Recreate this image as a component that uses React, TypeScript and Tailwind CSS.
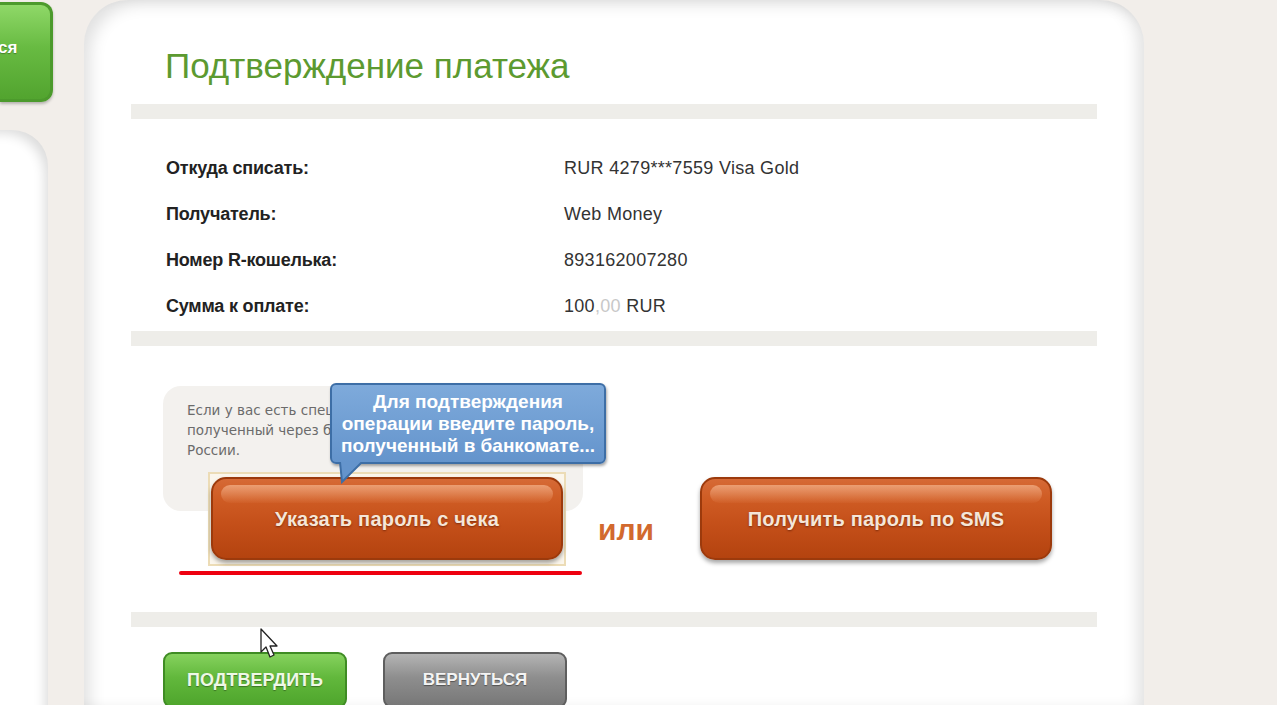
const rows = [
  { label: "Откуда списать:", value: <>RUR 4279***7559 Visa Gold</> },
  { label: "Получатель:", value: <>Web Money</> },
  { label: "Номер R-кошелька:", value: <>893162007280</> },
  {
    label: "Сумма к оплате:",
    value: (
      <>
        100<span className="text-[#c8c8c8]">,00</span> RUR
      </>
    ),
  },
];

const OrangeButton = ({ label }: { label: string }) => (
  <div className="relative flex h-[83px] w-[352px] items-center justify-center overflow-hidden rounded-[15px] border-2 border-[#9c3a0c] bg-[linear-gradient(to_bottom,#d66a36_0%,#cf5c24_25%,#c5501a_55%,#b4430f_100%)] shadow-[0_3px_4px_rgba(0,0,0,0.35)]">
    <div className="absolute left-[8px] right-[8px] top-[6px] h-[18px] rounded-[10px] bg-[linear-gradient(to_bottom,rgba(255,205,170,0.55),rgba(255,170,120,0.05))]" />
    <span className="relative text-[20px] font-bold tracking-[0.2px] text-[#f5e6d8] [text-shadow:0_1px_2px_rgba(80,20,0,0.6)]">
      {label}
    </span>
  </div>
);

const Cursor = () => (
  <svg width="22" height="32" viewBox="0 0 22 32" className="absolute left-[176px] top-[628px]">
    <path d="M1 1 L1 24 L6 19 L10 29 L14 27 L10 18 L17 18 Z" fill="#fff" stroke="#222" strokeWidth="1.3" strokeLinejoin="round" />
  </svg>
);

export default function App() {
  return (
    <div className="flex h-[705px] w-[1277px] overflow-hidden bg-[#f2eeea] font-['Liberation_Sans',Arial,sans-serif]">
      {/* left column */}
      <div className="flex w-[53px] shrink-0 flex-col gap-[28px] pt-[2px]">
        <div className="relative flex h-[100px] w-[53px] items-center overflow-hidden rounded-r-[12px] border-[3px] border-l-0 border-[#4c9a2c] bg-[linear-gradient(to_bottom,#8fd868_0%,#68bb42_45%,#52a42f_100%)] pb-[8px] shadow-[0_2px_3px_rgba(0,0,0,0.25)]">
          <span className="-ml-[2px] text-[17px] font-bold text-white [text-shadow:0_1px_1px_rgba(0,0,0,0.3)]">ся</span>
        </div>
        <div className="w-[48px] flex-1 rounded-tr-[36px] bg-white shadow-[inset_-9px_9px_12px_-6px_rgba(0,0,0,0.14)]" />
      </div>

      {/* main panel */}
      <div className="relative ml-[31px] w-[1060px] shrink-0 rounded-t-[44px] bg-white px-[47px] shadow-[inset_12px_10px_16px_-6px_rgba(0,0,0,0.12),inset_-12px_0_16px_-6px_rgba(0,0,0,0.12)]">
        <div className="h-[104px] pl-[34px] pt-[44px]">
          <h1 className="text-[35px] leading-[44px] text-[#5c9a30]">Подтверждение платежа</h1>
        </div>
        <div className="h-[15px] bg-[#eeede9]" />

        <div className="mb-[2px] mt-[26px]">
          {rows.map((row) => (
            <div key={row.label} className="flex h-[46px] items-center">
              <div className="w-[433px] pl-[35px] text-[18px] font-bold tracking-[-0.2px] text-[#222]">{row.label}</div>
              <div className="text-[18px] tracking-[0.3px] text-[#333]">{row.value}</div>
            </div>
          ))}
        </div>
        <div className="h-[15px] bg-[#eeede9]" />

        <div className="ml-[32px] mt-[40px] h-[125px] w-[420px] rounded-[18px] bg-[#f3f1ee] pl-[24px] pt-[14px] font-['DejaVu_Sans',Verdana,sans-serif] text-[13.5px] leading-[20px] text-[#6b6b6b]">
          Если у вас есть специальный пароль,
          <br />
          полученный через банкомат Сбербанка
          <br />
          России.
        </div>

        <div className="-mt-[39px] flex items-start">
          <div className="ml-[77px] border-2 border-[#ecdcb6] bg-[#fbf6ec] px-[1px] pb-[4px] pt-[3px]">
            <OrangeButton label="Указать пароль с чека" />
          </div>
          <div className="ml-[32px] mt-[38px] text-[30px] font-bold leading-[40px] text-[#d2692e]">или</div>
          <div className="ml-[46px] mt-[5px]">
            <OrangeButton label="Получить пароль по SMS" />
          </div>
        </div>

        <div className="ml-[48px] mt-[5px] h-[4px] w-[403px] rounded-full bg-[#ee0010]" />

        <div className="mt-[37px] h-[15px] bg-[#eeede9]" />

        <div className="ml-[32px] mt-[25px] flex gap-[36px]">
          <div className="flex h-[56px] w-[184px] items-center justify-center rounded-[9px] border-2 border-[#3f8c24] bg-[linear-gradient(to_bottom,#86d25e_0%,#62b83c_45%,#4ea52c_100%)] text-[18px] font-bold text-[#eef8e6] [text-shadow:0_1px_1px_rgba(0,0,0,0.35)]">
            ПОДТВЕРДИТЬ
          </div>
          <div className="flex h-[56px] w-[184px] items-center justify-center rounded-[9px] border-2 border-[#5e5e5e] bg-[linear-gradient(to_bottom,#b4b4b4_0%,#8e8e8e_45%,#777_100%)] text-[17px] font-bold text-[#f4f4f4] [text-shadow:0_1px_1px_rgba(0,0,0,0.4)]">
            ВЕРНУТЬСЯ
          </div>
        </div>

        {/* tooltip */}
        <div className="absolute left-[246px] top-[383px] w-[276px]">
          <div className="rounded-[6px] border-2 border-[#3d6ea6] bg-[linear-gradient(to_bottom,#7eaadb,#6494cc)] pb-[5px] pt-[6px] text-center text-[19px] font-bold leading-[22px] text-white shadow-[1px_2px_3px_rgba(0,0,0,0.35)]">
            Для подтверждения
            <br />
            операции введите пароль,
            <br />
            полученный в банкомате...
          </div>
          <svg width="30" height="22" viewBox="0 0 30 22" className="-mt-[2px] ml-[8px]">
            <path d="M2 0 L4 20 L24 0 Z" fill="#6494cc" />
            <path d="M2 0 L4 20 L24 0" fill="none" stroke="#3d6ea6" strokeWidth="2" />
          </svg>
        </div>

        <Cursor />
      </div>
    </div>
  );
}
